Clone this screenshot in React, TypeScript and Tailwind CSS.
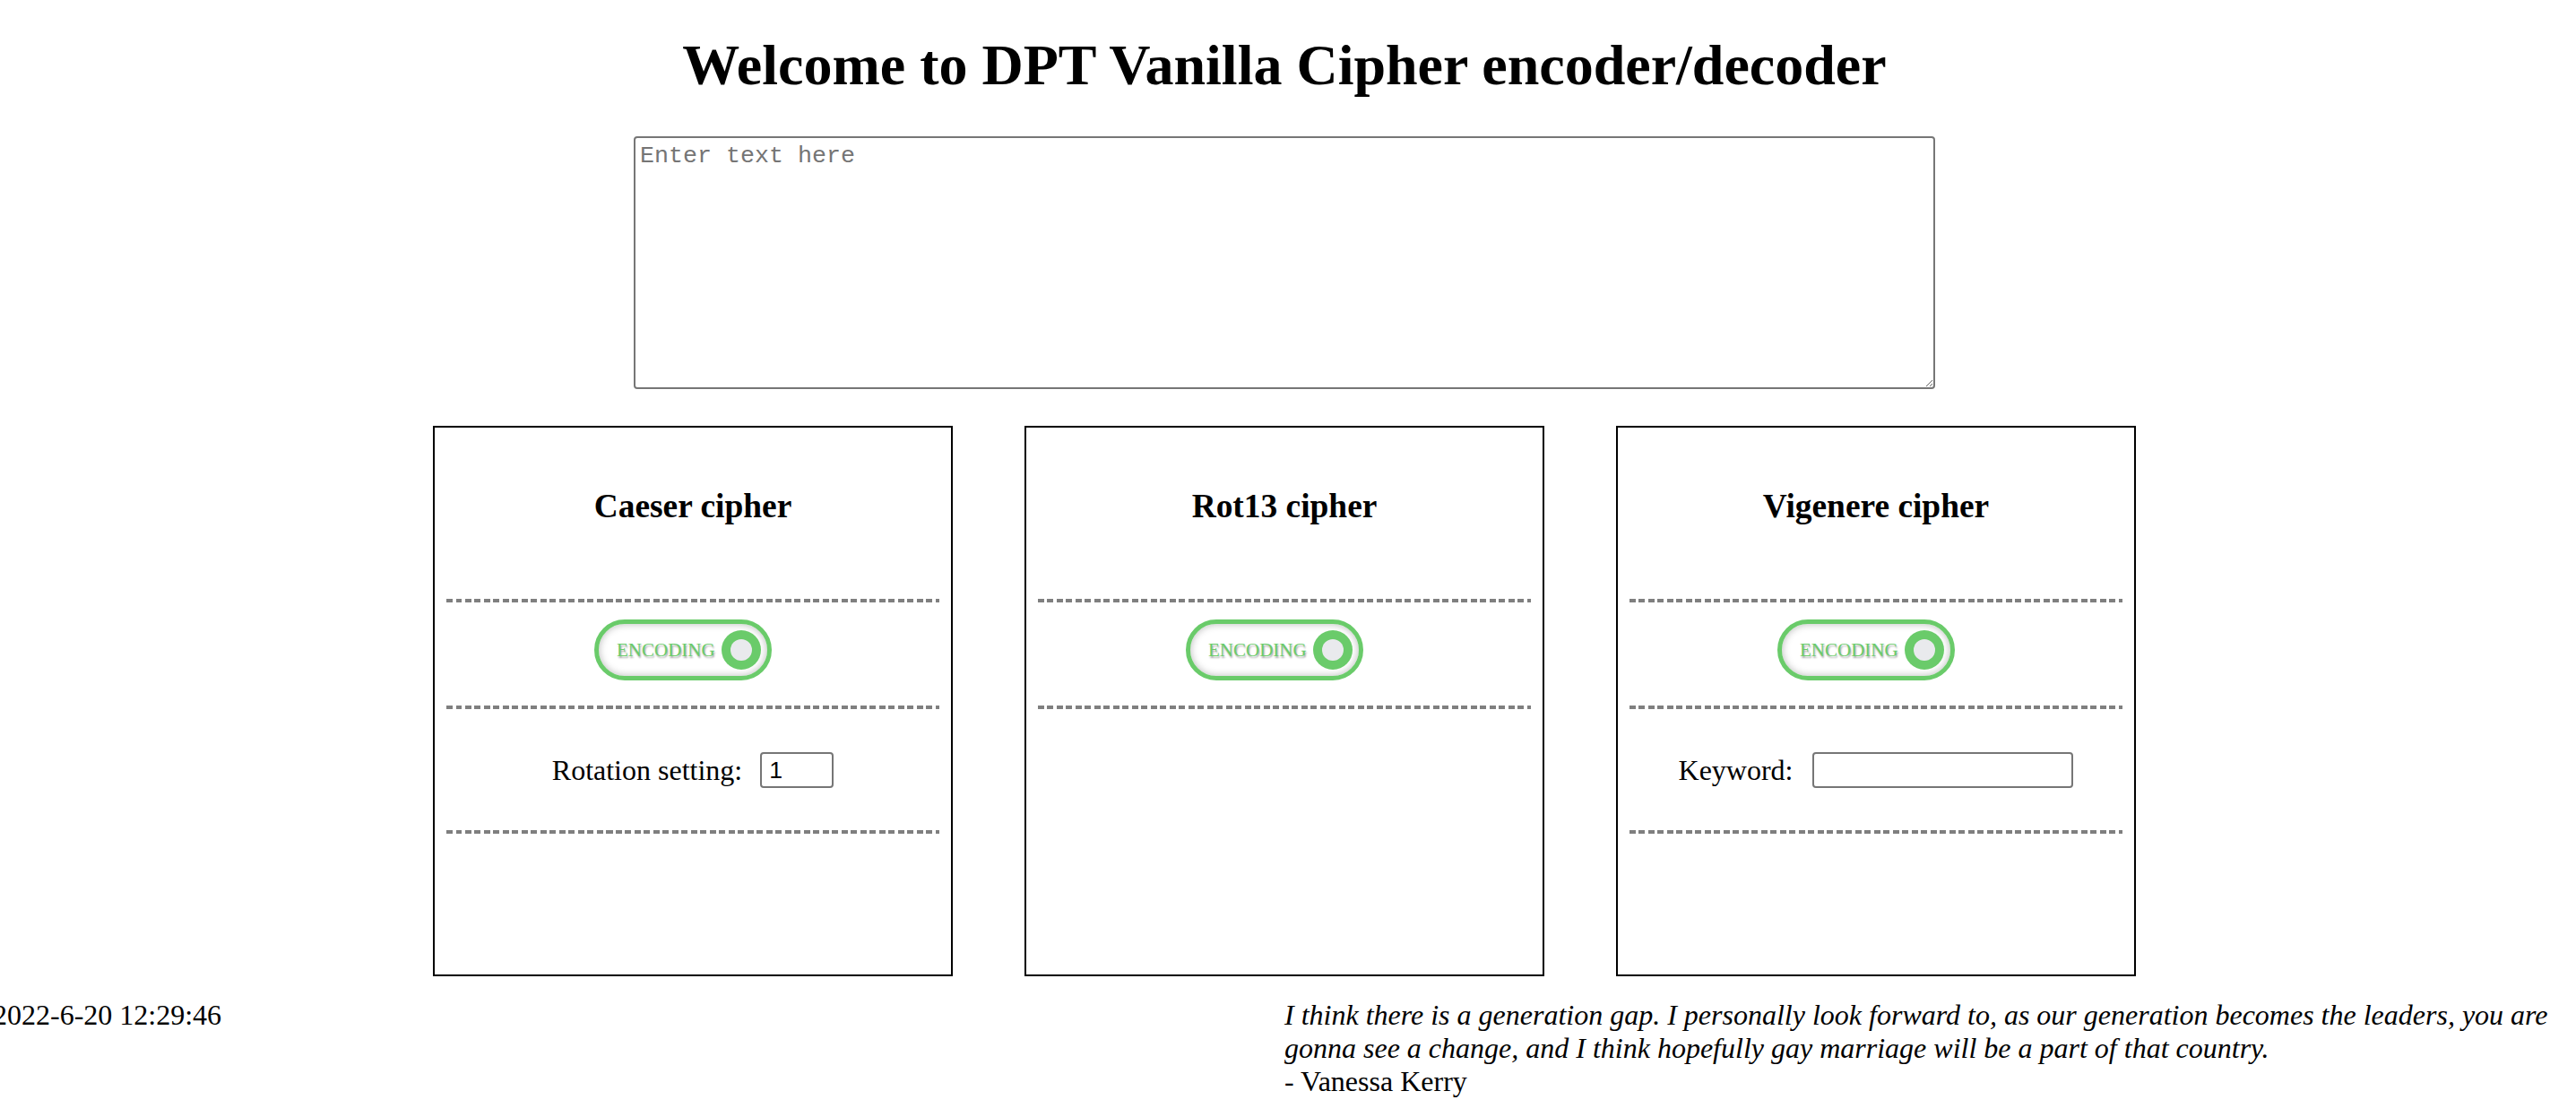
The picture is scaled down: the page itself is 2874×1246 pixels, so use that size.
import React from "react";

function Toggle() {
  return (
    <div className="flex justify-center pr-[22px]">
      <div className="relative w-[198px] h-[68px] rounded-full border-[5px] border-[#6acb6a] bg-white shadow-[inset_0_0_8px_rgba(0,0,0,0.28)] flex items-center">
        <span className="ml-[20px] text-[21px] leading-none text-[#6acb6a] font-['Liberation_Serif',serif] [text-shadow:1px_2px_2px_rgba(0,0,0,0.35)]">
          ENCODING
        </span>
        <div className="absolute right-[7px] top-1/2 -translate-y-1/2 w-[44px] h-[44px] rounded-full bg-[#6acb6a] flex items-center justify-center">
          <div className="w-[24px] h-[24px] rounded-full bg-[#e9eaed]" />
        </div>
      </div>
    </div>
  );
}

function Dash() {
  return (
    <div className="mx-[13px] h-[4px] bg-[repeating-linear-gradient(to_right,#7f7f7f_0px,#7f7f7f_7px,transparent_7px,transparent_10.5px)]" />
  );
}

function Card({ title, children, third }: { title: string; children?: React.ReactNode; third?: boolean }) {
  return (
    <div className="w-[580px] h-[614px] border-2 border-black flex flex-col">
      <div className="h-[191px] pt-[66px] text-center text-[37.4px] leading-[43px] font-bold">{title}</div>
      <Dash />
      <div className="pt-[19px] pb-[28px]">
        <Toggle />
      </div>
      <Dash />
      {children}
      {third && <Dash />}
    </div>
  );
}

export default function App() {
  return (
    <div className="w-[2866px] min-h-[1246px] bg-white text-black font-['Liberation_Serif','Times_New_Roman',serif]">
      <h1 className="pt-[36px] text-center text-[64px] leading-[74px] font-bold">
        Welcome to DPT Vanilla Cipher encoder/decoder
      </h1>
      <div className="mt-[42px] flex justify-center">
        <textarea
          placeholder="Enter text here"
          className="w-[1452px] h-[282px] border-2 border-[#767676] rounded-[4px] px-[5px] py-[4px] text-[26.67px] leading-[32px] font-['Liberation_Mono','Courier_New',monospace] placeholder:text-[#757575] outline-none"
        />
      </div>
      <div className="mt-[41px] flex justify-center gap-[80px]">
        <Card title="Caeser cipher" third>
          <div className="pt-[48px] pb-[47px] flex items-center justify-center gap-[20px]">
            <span className="text-[32px] leading-[37px]">Rotation setting:</span>
            <input
              defaultValue="1"
              className="w-[82px] h-[40px] border-2 border-[#767676] rounded-[4px] px-[8px] text-[26.67px] font-['Liberation_Sans',Arial,sans-serif] outline-none"
            />
          </div>
        </Card>
        <Card title="Rot13 cipher" />
        <Card title="Vigenere cipher" third>
          <div className="pt-[48px] pb-[47px] flex items-center justify-center gap-[22px]">
            <span className="text-[32px] leading-[37px]">Keyword:</span>
            <input
              className="w-[291px] h-[40px] border-2 border-[#767676] rounded-[4px] px-[8px] text-[26.67px] font-['Liberation_Sans',Arial,sans-serif] outline-none"
            />
          </div>
        </Card>
      </div>
      <div className="mt-[25px] flex text-[32px] leading-[37px]">
        <div className="w-1/2">
          <div className="-ml-[8px]">2022-6-20 12:29:46</div>
        </div>
        <div className="w-1/2">
          <div className="italic">
            I think there is a generation gap. I personally look forward to, as our generation becomes the leaders, you are gonna see a change, and I think hopefully gay marriage will be a part of that country.
          </div>
          <div>- Vanessa Kerry</div>
        </div>
      </div>
    </div>
  );
}
